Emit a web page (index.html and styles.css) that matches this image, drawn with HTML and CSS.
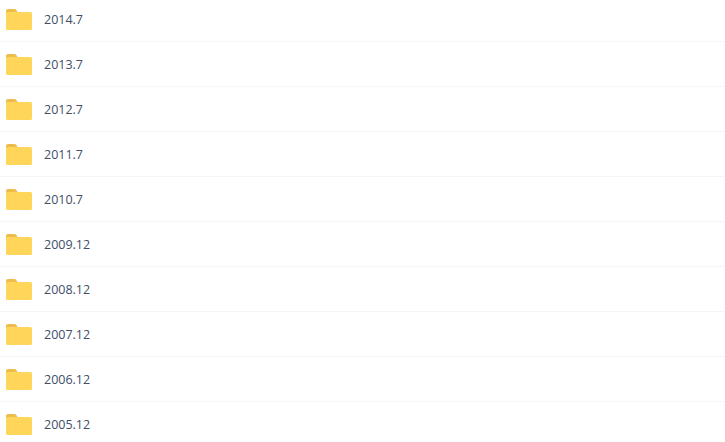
FILE: index.html
```html
<!DOCTYPE html>
<html lang="en">
<head>
    <meta charset="UTF-8">
    <meta name="viewport" content="width=device-width, initial-scale=1.0">
    <title>Files</title>
    <link rel="stylesheet" href="styles.css">
</head>
<body>
<svg class="defs" width="0" height="0">
    <symbol id="folder" viewBox="0 0 26 21">
        <path d="M0 2a2 2 0 0 1 2-2h6.500a2 2 0 0 1 1.600.8L12 3.500V6H0z" fill="#eebb4d"/>
        <rect x="0" y="3" width="26" height="18" rx="1.500" fill="#ffd659"/>
    </symbol>
</svg>
<ul class="file-list">
    <li class="file-row"><svg class="folder"><use href="#folder"/></svg><span class="file-name">2014.7</span></li>
    <li class="file-row"><svg class="folder"><use href="#folder"/></svg><span class="file-name">2013.7</span></li>
    <li class="file-row"><svg class="folder"><use href="#folder"/></svg><span class="file-name">2012.7</span></li>
    <li class="file-row"><svg class="folder"><use href="#folder"/></svg><span class="file-name">2011.7</span></li>
    <li class="file-row"><svg class="folder"><use href="#folder"/></svg><span class="file-name">2010.7</span></li>
    <li class="file-row"><svg class="folder"><use href="#folder"/></svg><span class="file-name">2009.12</span></li>
    <li class="file-row"><svg class="folder"><use href="#folder"/></svg><span class="file-name">2008.12</span></li>
    <li class="file-row"><svg class="folder"><use href="#folder"/></svg><span class="file-name">2007.12</span></li>
    <li class="file-row"><svg class="folder"><use href="#folder"/></svg><span class="file-name">2006.12</span></li>
    <li class="file-row"><svg class="folder"><use href="#folder"/></svg><span class="file-name">2005.12</span></li>
</ul>
</body>
</html>
```

FILE: styles.css
```css
html, body {
    height: 100%;
    overflow: hidden;
}
body {
    margin: 0;
    background: #fff;
    font-family: "Open Sans", "Noto Sans", sans-serif;
}
.defs {
    display: block;
    height: 0;
}
.file-list {
    list-style-type: none;
    margin: -3px 0 0;
    padding: 0;
}
.file-row {
    display: flex;
    align-items: center;
    gap: 12px;
    height: 44px;
    padding-left: 6px;
    border-bottom: 1px solid #f4f6f8;
}
.folder {
    width: 26px;
    height: 21px;
    flex-shrink: 0;
}
.file-name {
    font-size: 12.5px;
    color: #424e67;
}
```
